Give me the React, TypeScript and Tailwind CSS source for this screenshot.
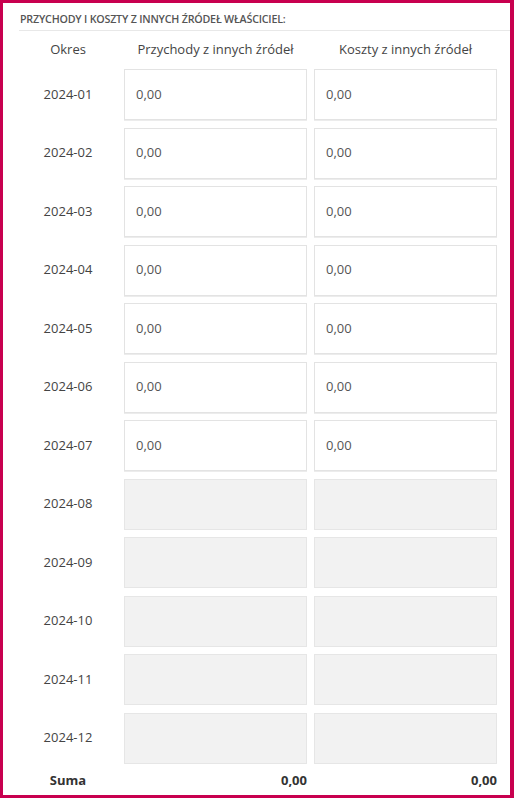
const months = [
  { okres: '2024-01', przychody: '0,00', koszty: '0,00', enabled: true },
  { okres: '2024-02', przychody: '0,00', koszty: '0,00', enabled: true },
  { okres: '2024-03', przychody: '0,00', koszty: '0,00', enabled: true },
  { okres: '2024-04', przychody: '0,00', koszty: '0,00', enabled: true },
  { okres: '2024-05', przychody: '0,00', koszty: '0,00', enabled: true },
  { okres: '2024-06', przychody: '0,00', koszty: '0,00', enabled: true },
  { okres: '2024-07', przychody: '0,00', koszty: '0,00', enabled: true },
  { okres: '2024-08', przychody: '', koszty: '', enabled: false },
  { okres: '2024-09', przychody: '', koszty: '', enabled: false },
  { okres: '2024-10', przychody: '', koszty: '', enabled: false },
  { okres: '2024-11', przychody: '', koszty: '', enabled: false },
  { okres: '2024-12', przychody: '', koszty: '', enabled: false },
];

function Cell({ value, enabled }: { value: string; enabled: boolean }) {
  return (
    <div
      className={
        enabled
          ? 'w-[183px] h-[51px] flex items-center px-[11px] bg-white border border-[#e3e3e3] shadow-[0_1px_0_#ececec] text-[13px] text-[#555]'
          : 'w-[183px] h-[51px] bg-[#f2f2f2] border border-[#e6e6e6]'
      }
    >
      {value}
    </div>
  );
}

export default function App() {
  return (
    <main
      className="w-[514px] h-[798px] bg-white border-[3px] border-r-4 border-[#c8004f] text-[#444]"
      style={{ fontFamily: '"Open Sans", "Noto Sans", sans-serif' }}
    >
      {/* Title */}
      <div className="ml-[16px] pt-[8px] pb-[3px] pl-[1px] border-b border-[#e8e8e8] text-[10.7px] leading-[16px] font-semibold uppercase tracking-[-0.2px] text-[#555]">
        Przychody i koszty z innych źródeł właściciel:
      </div>

      {/* Header */}
      <div className="flex items-center h-[38px] text-[13px] text-[#444]">
        <div className="w-[104px] ml-[13px] text-center">Okres</div>
        <div className="w-[183px] ml-[4px] text-center">Przychody z innych źródeł</div>
        <div className="w-[183px] ml-[7px] text-center">Koszty z innych źródeł</div>
      </div>

      {/* Rows */}
      <div className="flex flex-col gap-y-[7.5px]">
        {months.map((m) => (
          <div key={m.okres} className="flex items-center">
            <div className="w-[104px] ml-[13px] text-center text-[13px] text-[#444]">{m.okres}</div>
            <div className="ml-[4px]">
              <Cell value={m.przychody} enabled={m.enabled} />
            </div>
            <div className="ml-[7px]">
              <Cell value={m.koszty} enabled={m.enabled} />
            </div>
          </div>
        ))}
      </div>

      {/* Suma */}
      <div className="flex items-center h-[20px] mt-[7px] text-[13px] font-bold text-[#333]">
        <div className="w-[104px] ml-[13px] text-center">Suma</div>
        <div className="w-[183px] ml-[4px] text-right">0,00</div>
        <div className="w-[183px] ml-[7px] text-right">0,00</div>
      </div>
    </main>
  );
}
